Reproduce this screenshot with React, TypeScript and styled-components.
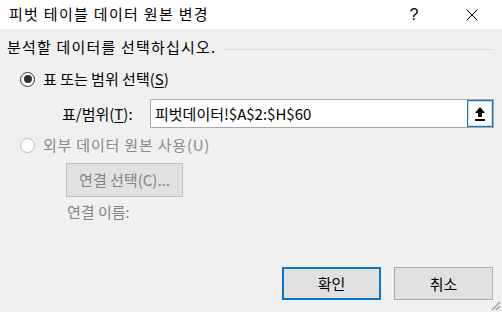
import styled, { createGlobalStyle } from 'styled-components'

const GlobalStyle = createGlobalStyle`
  html, body {
    margin: 0;
    padding: 0;
    background: #f0f0f0;
  }
  body {
    font-family: 'Noto Sans CJK KR', 'Noto Sans', sans-serif;
    font-size: 15px;
    color: #000;
  }
`

const Window = styled.div`
  width: 502px;
  height: 312px;
  display: flex;
  flex-direction: column;
  background: #f0f0f0;
  position: relative;
  overflow: hidden;
`

const TitleBar = styled.div`
  height: 29px;
  background: #fff;
  display: flex;
  align-items: center;
  padding: 0 1px 0 9px;
`

const Title = styled.div`
  flex: 1;
  font-size: 15px;
  line-height: 20px;
  letter-spacing: 1.3px;
  margin-top: -2px;
`

const TitleButton = styled.div`
  width: 58px;
  height: 29px;
  display: flex;
  align-items: center;
  justify-content: center;
  font-family: 'Liberation Sans', sans-serif;
  font-size: 16px;
`

const Body = styled.div`
  flex: 1;
  display: flex;
  flex-direction: column;
  padding: 0 8px 12px 7px;
`

const Heading = styled.div`
  margin-top: 8px;
  display: flex;
  align-items: center;
  gap: 6px;
  line-height: 20px;
  letter-spacing: 1.2px;
`

const HeadLine = styled.div`
  flex: 1;
  height: 1px;
  background: #dcdcdc;
  margin-top: 4px;
`

const RadioRow = styled.label<{ $disabled?: boolean; $top: number }>`
  margin-top: ${(p) => p.$top}px;
  margin-left: 13px;
  display: flex;
  align-items: center;
  gap: 8px;
  line-height: 20px;
  color: ${(p) => (p.$disabled ? '#8a8a8a' : '#000')};
  letter-spacing: ${(p) => (p.$disabled ? '0.8px' : '0')};
`

const RadioCircle = styled.span<{ $checked?: boolean; $disabled?: boolean }>`
  width: 13px;
  height: 13px;
  border-radius: 50%;
  border: 1px solid ${(p) => (p.$disabled ? '#bcbcbc' : '#333')};
  background: #fff;
  display: flex;
  align-items: center;
  justify-content: center;
  &::after {
    content: '';
    display: ${(p) => (p.$checked ? 'block' : 'none')};
    width: 8px;
    height: 8px;
    border-radius: 50%;
    background: #333;
  }
`

const Key = styled.span`
  text-decoration: underline;
  text-underline-offset: 2px;
`

const RangeRow = styled.div`
  margin-top: 10px;
  margin-left: 55px;
  display: flex;
  align-items: center;
`

const RangeLabel = styled.span`
  width: 88px;
  line-height: 20px;
`

const Field = styled.div`
  width: 344px;
  height: 29px;
  box-sizing: border-box;
  border: 1px solid #a9a9a9;
  background: #fff;
  display: flex;
  align-items: center;
  padding: 0 0 0 4px;
`

const FieldText = styled.span`
  flex: 1;
  line-height: 20px;
`

const PickButton = styled.div`
  width: 26px;
  height: 27px;
  box-sizing: border-box;
  border: 1px solid #0078d7;
  background: #fff;
  display: flex;
  align-items: center;
  justify-content: center;
  box-shadow: inset 0 0 0 1px #cce4f7;
`

const DisabledButton = styled.div`
  margin-top: 8px;
  margin-left: 59px;
  width: 117px;
  height: 34px;
  box-sizing: border-box;
  border: 1px solid #bfbfbf;
  background: #e1e1e1;
  color: #838383;
  display: flex;
  align-items: center;
  justify-content: center;
  line-height: 20px;
`

const ConnName = styled.div`
  margin-top: 5px;
  margin-left: 60px;
  line-height: 20px;
  color: #838383;
`

const Footer = styled.div`
  margin-top: auto;
  display: flex;
  justify-content: flex-end;
  gap: 13px;
  padding-right: 1px;
`

const DialogButton = styled.button<{ $primary?: boolean }>`
  width: 99px;
  height: 33px;
  box-sizing: border-box;
  background: #e1e1e1;
  border: ${(p) => (p.$primary ? '2px solid #0078d7' : '1px solid #adadad')};
  font-family: inherit;
  font-size: 15px;
  color: #000;
  padding: 0;
`

const Grip = styled.svg`
  position: absolute;
  right: 1px;
  bottom: 1px;
`

export default function App() {
  return (
    <Window>
      <GlobalStyle />
      <TitleBar>
        <Title>피벗 테이블 데이터 원본 변경</Title>
        <TitleButton>?</TitleButton>
        <TitleButton>
          <svg width="12" height="12" viewBox="0 0 12 12">
            <path d="M0.5 0.5 L11.5 11.5 M11.5 0.5 L0.5 11.5" stroke="#000" strokeWidth="1" />
          </svg>
        </TitleButton>
      </TitleBar>
      <Body>
        <Heading>
          분석할 데이터를 선택하십시오.
          <HeadLine />
        </Heading>
        <RadioRow $top={12}>
          <RadioCircle $checked />
          <span>
            표 또는 범위 선택(<Key>S</Key>)
          </span>
        </RadioRow>
        <RangeRow>
          <RangeLabel>
            표/범위(<Key>T</Key>):
          </RangeLabel>
          <Field>
            <FieldText>피벗데이터!$A$2:$H$60</FieldText>
            <PickButton>
              <svg width="12" height="16" viewBox="0 0 12 16">
                <path d="M6 1 L11 7 H8 V11 H4 V7 H1 Z" fill="#000" />
                <rect x="1" y="13" width="10" height="2" fill="#000" />
              </svg>
            </PickButton>
          </Field>
        </RangeRow>
        <RadioRow $top={7} $disabled>
          <RadioCircle $disabled />
          <span>외부 데이터 원본 사용(U)</span>
        </RadioRow>
        <DisabledButton>연결 선택(C)...</DisabledButton>
        <ConnName>연결 이름:</ConnName>
        <Footer>
          <DialogButton $primary>확인</DialogButton>
          <DialogButton>취소</DialogButton>
        </Footer>
      </Body>
      <Grip width="12" height="12" viewBox="0 0 12 12">
        <path d="M11 3 L3 11 M11 7 L7 11" stroke="#a0a0a0" strokeWidth="1.5" />
      </Grip>
    </Window>
  )
}
